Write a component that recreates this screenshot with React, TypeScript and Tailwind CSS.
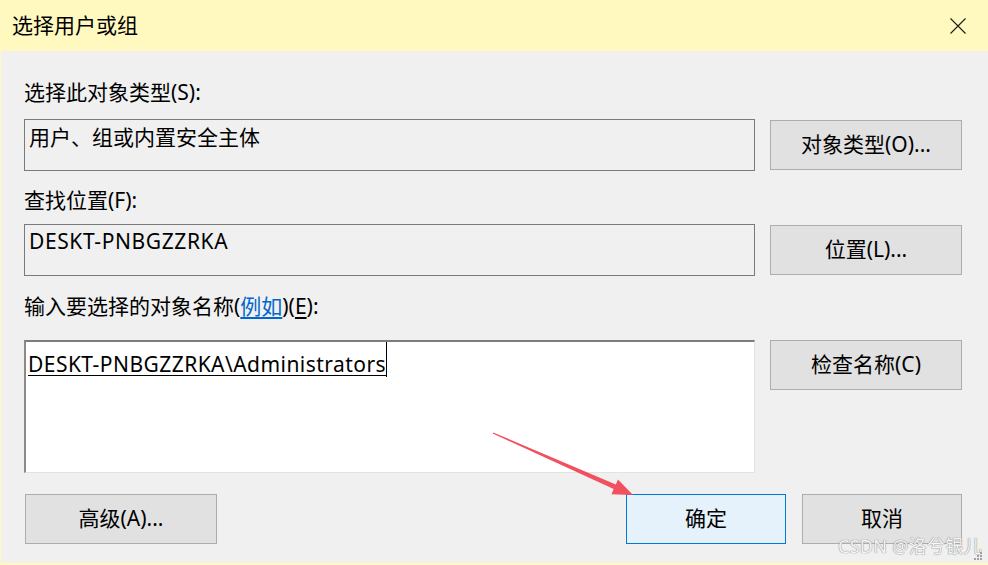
const font = '[font-family:"Noto_Sans","Noto_Sans_CJK_SC",sans-serif]';

function Button({ label, width, primary }: { label: string; width: string; primary?: boolean }) {
  return (
    <div
      className={`${width} h-[50px] flex items-center justify-center text-[21px] text-black border ${
        primary ? 'bg-[#e5f1fb] border-[#0078d7]' : 'bg-[#e1e1e1] border-[#adadad]'
      }`}
    >
      {label}
    </div>
  );
}

function ReadonlyBox({ text, pt, latin }: { text: string; pt: string; latin?: boolean }) {
  return (
    <div className={`w-[731px] h-[52px] border border-[#7a7a7a] bg-[#f0f0f0] pl-[4px] ${pt}`}>
      <span className={`block leading-[28px] text-[21px] text-black ${latin ? 'tracking-[0.6px]' : ''}`}>
        {text}
      </span>
    </div>
  );
}

export default function App() {
  return (
    <div className={`relative w-[988px] h-[565px] bg-[#fff9c0] overflow-hidden ${font}`}>
      {/* title bar */}
      <div className="h-[51px] flex items-center justify-between pl-[12px] pr-[22px]">
        <span className="text-[21px] text-black leading-none">选择用户或组</span>
        <svg width="16" height="16" viewBox="0 0 16 16" className="text-[#1a1a1a]">
          <path d="M0.5 0.5L15.5 15.5M15.5 0.5L0.5 15.5" stroke="currentColor" strokeWidth="1.1" />
        </svg>
      </div>

      {/* body */}
      <div className="ml-[1px] h-[512px] bg-[#f0f0f0] pl-[23px] pr-[26px] pt-[27px] text-[21px] text-black">
        <div className="leading-[28px]">选择此对象类型(S):</div>
        <div className="mt-[13px] flex items-start gap-[15px]">
          <ReadonlyBox text="用户、组或内置安全主体" pt="pt-[3px]" />
          <div className="mt-[1px]">
            <Button label="对象类型(O)..." width="w-[192px]" />
          </div>
        </div>

        <div className="mt-[15px] leading-[28px]">查找位置(F):</div>
        <div className="mt-[10px] flex items-start gap-[15px]">
          <ReadonlyBox text="DESKT-PNBGZZRKA" pt="pt-[2px]" latin />
          <div className="mt-[1px]">
            <Button label="位置(L)..." width="w-[192px]" />
          </div>
        </div>

        <div className="mt-[16px] leading-[28px]">
          输入要选择的对象名称(
          <span className="text-[#0066cc] underline underline-offset-[3px]">例如</span>
          )(<span className="underline underline-offset-[3px]">E</span>):
        </div>
        <div className="mt-[20px] flex items-start gap-[15px]">
          <div className="w-[731px] h-[133px] bg-white border-t-2 border-l-2 border-t-[#7c7c7c] border-l-[#8a8a8a] border-r border-b border-r-[#e3e3e3] border-b-[#e3e3e3] pl-[2px] flex items-start">
            <span className="mt-[8px] leading-[28px] tracking-[0.45px] underline underline-offset-[3px] decoration-1">
              DESKT-PNBGZZRKA\Administrators
            </span>
            <span className="w-px h-[35px] bg-black" />
          </div>
          <Button label="检查名称(C)" width="w-[192px]" />
        </div>

        <div className="mt-[21px] flex items-start">
          <div className="ml-[1px]">
            <Button label="高级(A)..." width="w-[192px]" />
          </div>
          <div className="ml-auto flex gap-[16px]">
            <Button label="确定" width="w-[160px]" primary />
            <Button label="取消" width="w-[160px]" />
          </div>
        </div>
      </div>

      {/* annotation arrow */}
      <svg className="absolute left-0 top-0 pointer-events-none" width="988" height="565">
        <polygon
          points="493.3,432.4 615.8,484.6 618,479.6 633,495 611.5,494.2 613.7,489.1 492.7,433.6"
          fill="#f2505f"
        />
      </svg>

      {/* watermark */}
      <span className="absolute left-[838px] top-[534px] text-[18px] leading-[24px] text-[#f6f6f6] [text-shadow:0_0_1px_#7a7a7a,0_0_1px_#9a9a9a] tracking-[0.3px]">
        CSDN @洛兮银儿
      </span>

      {/* resize grip */}
      <div className="absolute right-[6px] bottom-[5px] grid grid-cols-3 gap-[1px]">
        <span className="w-[2px] h-[2px]" />
        <span className="w-[2px] h-[2px]" />
        <span className="w-[2px] h-[2px] bg-[#a0a0a0]" />
        <span className="w-[2px] h-[2px]" />
        <span className="w-[2px] h-[2px] bg-[#a0a0a0]" />
        <span className="w-[2px] h-[2px] bg-[#a0a0a0]" />
        <span className="w-[2px] h-[2px] bg-[#a0a0a0]" />
        <span className="w-[2px] h-[2px] bg-[#a0a0a0]" />
        <span className="w-[2px] h-[2px] bg-[#a0a0a0]" />
      </div>
    </div>
  );
}
